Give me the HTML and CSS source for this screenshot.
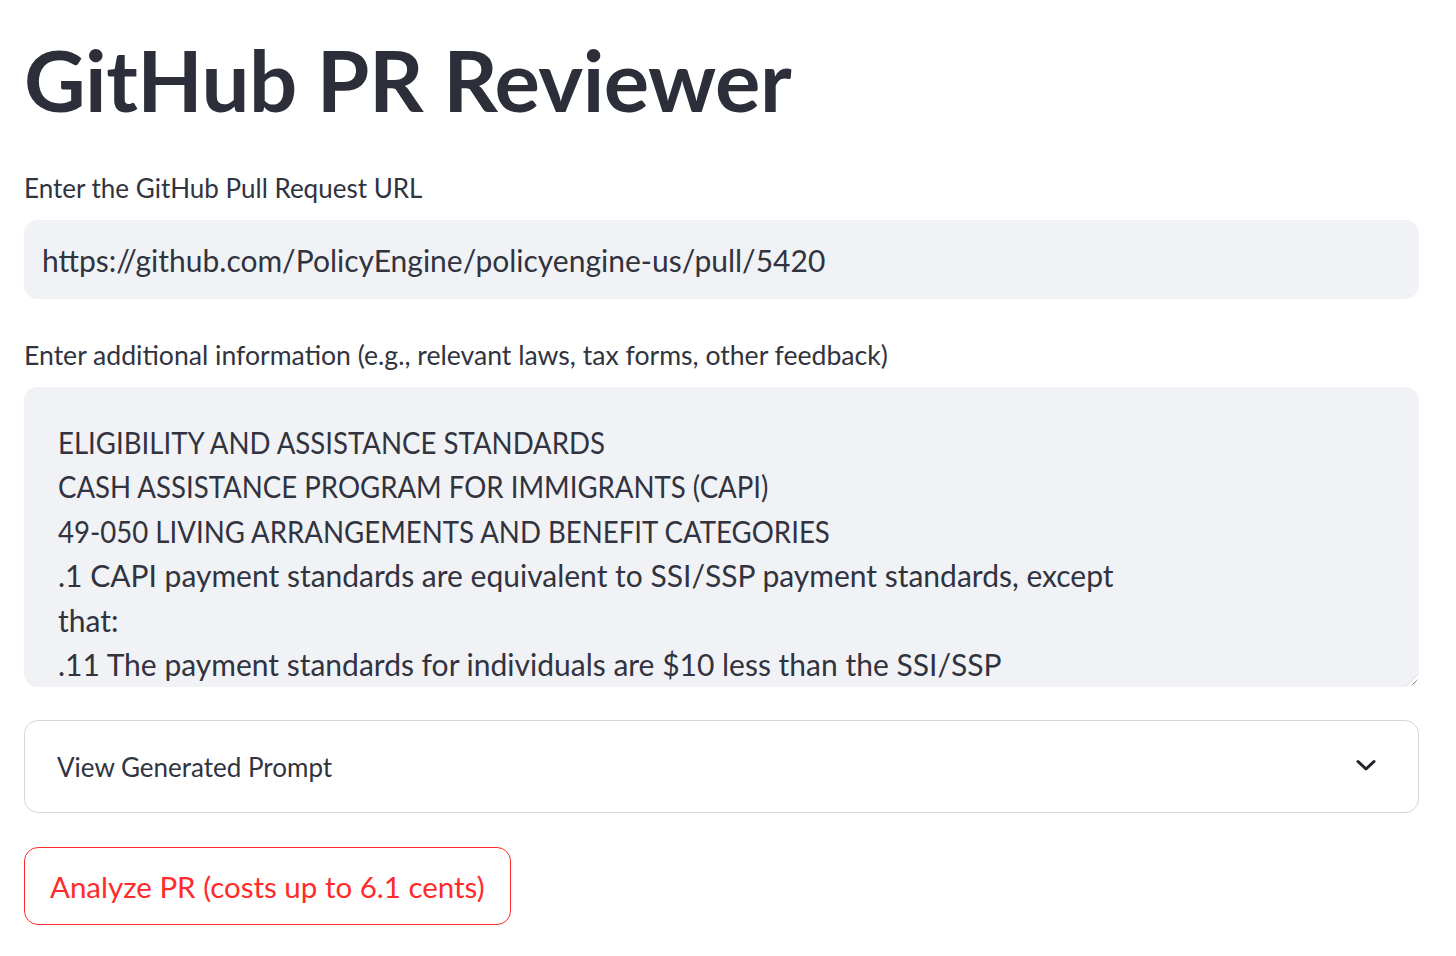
FILE: index.html
```html
<!DOCTYPE html>
<html lang="en">
<head>
  <meta charset="UTF-8" />
  <meta name="viewport" content="width=device-width, initial-scale=1.0" />
  <title>GitHub PR Reviewer</title>
  <link rel="stylesheet" href="styles.css">
</head>
<body>
  <main class="app">
    <h1 class="title">GitHub PR Reviewer</h1>

    <div class="field">
      <label for="prUrl">Enter the GitHub Pull Request URL</label>
      <input type="text" id="prUrl" class="text-input" value="https://github.com/PolicyEngine/policyengine-us/pull/5420" />
    </div>

    <div class="field field-area">
      <label for="extra">Enter additional information (e.g., relevant laws, tax forms, other feedback)</label>
      <div id="extra" class="text-area" role="textbox" aria-multiline="true" contenteditable="true">
        <div class="caps">ELIGIBILITY AND ASSISTANCE STANDARDS</div>
        <div class="caps">CASH ASSISTANCE PROGRAM FOR IMMIGRANTS (CAPI)</div>
        <div class="caps">49-050 LIVING ARRANGEMENTS AND BENEFIT CATEGORIES</div>
        <div>.1 CAPI payment standards are equivalent to SSI/SSP payment standards, except that:</div>
        <div>.11 The payment standards for individuals are $10 less than the SSI/SSP</div>
      </div>
    </div>

    <details class="expander">
      <summary>
        <span>View Generated Prompt</span>
        <svg class="chevron" width="24" height="24" viewBox="0 0 24 24" fill="none" stroke="currentColor" stroke-width="3" stroke-linecap="round" stroke-linejoin="round"><path d="M4 8.5l8 7.5 8-7.5"/></svg>
      </summary>
    </details>

    <button type="button" class="analyze-btn">Analyze PR (costs up to 6.1 cents)</button>
  </main>
</body>
</html>
```

FILE: styles.css
```css
:root {
  --text-color: #31333f;
  --input-bg: #f0f2f6;
  --accent: #ff2b2b;
}
body {
  margin: 0;
  padding: 0;
  background: #ffffff;
  color: var(--text-color);
  font-family: Lato, "Open Sans", sans-serif;
}
.app {
  padding: 28px 37px 0 24px;
}
.title {
  margin: 0 0 38px;
  font-size: 85px;
  font-weight: 700;
  line-height: 1.2;
  color: #2c2e39;
  letter-spacing: -0.5px;
}
.field {
  margin-bottom: 36px;
}
.field-area {
  margin-bottom: 33px;
}
label {
  display: block;
  font-size: 26px;
  line-height: 40px;
  margin-bottom: 12px;
}
.field + .field label {
  font-size: 26.6px;
}
.text-input,
.text-area {
  display: block;
  box-sizing: border-box;
  width: 100%;
  border: none;
  border-radius: 14px;
  background: var(--input-bg);
  color: var(--text-color);
  font-family: inherit;
  outline: none;
}
.text-input {
  height: 79px;
  padding: 0 18px;
  font-size: 30px;
}
.text-area {
  position: relative;
  height: 300px;
  padding: 33px 300px 0 34px;
  font-size: 30px;
  line-height: 44.4px;
  overflow: hidden;
}
.text-area .caps {
  transform: scaleX(0.92);
  transform-origin: left center;
  white-space: nowrap;
}
/* little resize corner bottom right */
.text-area::after {
  content: "";
  position: absolute;
  right: 0;
  bottom: 0;
  width: 14px;
  height: 14px;
  background: linear-gradient(135deg, transparent 47%, #c9cbd1 48%, #ffffff 54%, #ffffff 66%, #8e9097 67%, #8e9097 74%, #ffffff 75%);
  border-bottom-right-radius: 12px;
}
.expander {
  border: 1.5px solid #d6d6d9;
  border-radius: 14px;
  margin-bottom: 34px;
}
.expander summary {
  display: flex;
  align-items: center;
  justify-content: space-between;
  height: 91px;
  padding: 0 40px 0 32px;
  list-style: none;
  font-size: 26px;
  cursor: pointer;
}
.expander summary::-webkit-details-marker {
  display: none;
}
.chevron {
  color: #1f212b;
  margin-top: -4px;
}
.analyze-btn {
  height: 78px;
  padding: 0 25px;
  border: 1.5px solid var(--accent);
  border-radius: 14px;
  background: #ffffff;
  color: var(--accent);
  font-family: inherit;
  font-size: 29.5px;
  cursor: pointer;
}
```
